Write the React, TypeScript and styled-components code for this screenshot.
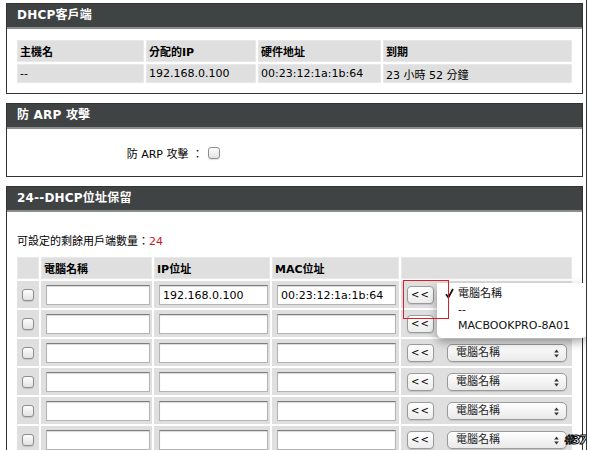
import React from "react";
import styled, { createGlobalStyle } from "styled-components";

const GlobalStyle = createGlobalStyle`
  html, body {
    margin: 0;
    padding: 0;
    background: #fff;
  }
  body {
    font-family: "DejaVu Sans", "Noto Sans CJK TC", sans-serif;
    font-size: 11px;
    color: #000;
  }
`;

const clients = [
  { host: "--", ip: "192.168.0.100", mac: "00:23:12:1a:1b:64", expire: "23 小時 52 分鐘" },
];

const reservations = [
  { name: "", ip: "192.168.0.100", mac: "00:23:12:1a:1b:64" },
  { name: "", ip: "", mac: "" },
  { name: "", ip: "", mac: "" },
  { name: "", ip: "", mac: "" },
  { name: "", ip: "", mac: "" },
  { name: "", ip: "", mac: "" },
];

export default function App() {
  return (
    <>
      <GlobalStyle />
      <Page>
        <Section>
          <SectionTitle>DHCP客戶端</SectionTitle>
          <SectionBody>
            <GridTable>
              <colgroup>
                <col style={{ width: 127 }} />
                <col style={{ width: 110 }} />
                <col style={{ width: 123 }} />
                <col style={{ width: 189 }} />
              </colgroup>
              <thead>
                <tr>
                  <HeadCell>主機名</HeadCell>
                  <HeadCell>分配的IP</HeadCell>
                  <HeadCell>硬件地址</HeadCell>
                  <HeadCell>到期</HeadCell>
                </tr>
              </thead>
              <tbody>
                {clients.map((c) => (
                  <tr key={c.mac}>
                    <DataCell>{c.host}</DataCell>
                    <DataCell>{c.ip}</DataCell>
                    <DataCell>{c.mac}</DataCell>
                    <DataCell>{c.expire}</DataCell>
                  </tr>
                ))}
              </tbody>
            </GridTable>
          </SectionBody>
        </Section>

        <Section>
          <SectionTitle>防 ARP 攻擊</SectionTitle>
          <ArpRow>
            <ArpLabel>防 ARP 攻擊 ：</ArpLabel>
            <CheckBox />
          </ArpRow>
        </Section>

        <Section>
          <SectionTitle>24--DHCP位址保留</SectionTitle>
          <SectionBody>
            <Info>
              可設定的剩餘用戶端數量：<Count>24</Count>
            </Info>
            <GridTable>
              <colgroup>
                <col style={{ width: 22 }} />
                <col style={{ width: 111 }} />
                <col style={{ width: 116 }} />
                <col style={{ width: 127 }} />
                <col style={{ width: 171 }} />
              </colgroup>
              <thead>
                <tr>
                  <HeadCell />
                  <HeadCell>電腦名稱</HeadCell>
                  <HeadCell>IP位址</HeadCell>
                  <HeadCell>MAC位址</HeadCell>
                  <HeadCell />
                </tr>
              </thead>
              <tbody>
                {reservations.map((r, i) => (
                  <ReserveRow key={i}>
                    <CheckCell>
                      <CheckBox />
                    </CheckCell>
                    <InputCell>
                      <TextBox $w={104}>{r.name}</TextBox>
                    </InputCell>
                    <InputCell>
                      <TextBox $w={109}>{r.ip}</TextBox>
                    </InputCell>
                    <InputCell>
                      <TextBox $w={119}>{r.mac}</TextBox>
                    </InputCell>
                    <InputCell>
                      <Controls>
                        <CopyButton>&lt;&lt;</CopyButton>
                        <FakeSelect>
                          電腦名稱
                          <SelectArrows />
                        </FakeSelect>
                      </Controls>
                    </InputCell>
                  </ReserveRow>
                ))}
              </tbody>
            </GridTable>
          </SectionBody>
        </Section>

        <Menu>
          <MenuItem>
            <CheckMark width="9" height="11" viewBox="0 0 9 11">
              <path d="M1 6.2 L3.4 9.5 L8 1" fill="none" stroke="#111" strokeWidth="1.7" />
            </CheckMark>
            電腦名稱
          </MenuItem>
          <MenuItem>--</MenuItem>
          <MenuItem>MACBOOKPRO-8A01</MenuItem>
        </Menu>
        <Highlight />
        <Tag>#37</Tag>
      </Page>
    </>
  );
}

const SelectArrows = () => (
  <ArrowIcon width="5" height="9" viewBox="0 0 5 9">
    <path d="M2.5 0.5 L4.8 3.5 H0.2 Z" fill="#333" />
    <path d="M2.5 8.5 L4.8 5.5 H0.2 Z" fill="#333" />
  </ArrowIcon>
);

const Page = styled.div`
  position: relative;
  width: 580px;
  height: 447px;
  padding: 3px 0 0 6px;
  border-right: 1px solid #333;
  overflow: hidden;
`;

const Section = styled.section`
  width: 575px;
  border: 1px solid #333;
  margin-bottom: 9px;
  background: #fff;
`;

const SectionTitle = styled.h2`
  margin: 0;
  height: 23px;
  line-height: 23px;
  padding-left: 10px;
  background: #404344;
  border-bottom: 2px solid #8b8d8d;
  color: #fff;
  font-size: 12px;
  font-weight: bold;
  letter-spacing: 0.2px;
`;

const SectionBody = styled.div`
  padding: 9px 8px 8px;
`;

const GridTable = styled.table`
  width: 559px;
  table-layout: fixed;
  border-collapse: separate;
  border-spacing: 2px;
  background: #fff;
`;

const HeadCell = styled.th`
  height: 22px;
  padding: 0 0 0 3px;
  background: #dfdfdf;
  box-shadow: inset 0 0 0 1px #e8e8e8;
  text-align: left;
  font-weight: bold;
  white-space: nowrap;
  overflow: hidden;
`;

const DataCell = styled.td`
  height: 19px;
  padding: 0 0 0 3px;
  background: #dfdfdf;
  box-shadow: inset 0 0 0 1px #e8e8e8;
  white-space: nowrap;
`;

const ArpRow = styled.div`
  display: flex;
  align-items: center;
  height: 47px;
`;

const ArpLabel = styled.span`
  width: 196px;
  text-align: right;
  margin-right: 5px;
  margin-top: 1px;
`;

const Info = styled.p`
  margin: 13px 2px 5px;
  line-height: 16px;
`;

const Count = styled.span`
  color: #d0141c;
`;

const ReserveRow = styled.tr`
  height: 27px;
`;

const CheckCell = styled.td`
  padding: 0;
  background: #dfdfdf;
  text-align: center;
  vertical-align: middle;
  line-height: 0;
`;

const InputCell = styled.td`
  padding: 0 0 0 5px;
  background: #dfdfdf;
  vertical-align: middle;
  white-space: nowrap;
  overflow: hidden;
`;

const CheckBox = styled.span`
  display: inline-block;
  box-sizing: border-box;
  width: 12px;
  height: 12px;
  border: 1px solid #8e8e8e;
  border-radius: 3px;
  background: linear-gradient(#fdfdfd, #e2e2e2);
  box-shadow: 0 1px 1px rgba(0, 0, 0, 0.12);
`;

const TextBox = styled.div<{ $w: number }>`
  box-sizing: border-box;
  width: ${(p) => p.$w}px;
  height: 20px;
  line-height: 19px;
  padding-left: 3px;
  background: #fff;
  border: 1px solid #b4b4b4;
  border-top-color: #7d7d7d;
  box-shadow: inset 0 1px 1px rgba(0, 0, 0, 0.15);
  font-size: 11px;
`;

const Controls = styled.div`
  display: flex;
  align-items: center;
  gap: 13px;
  padding-left: 1px;
`;

const CopyButton = styled.div`
  box-sizing: border-box;
  width: 27px;
  height: 18px;
  line-height: 16px;
  text-align: center;
  border: 1px solid #9a9a9a;
  border-radius: 4px;
  background: linear-gradient(#ffffff, #ececec);
  box-shadow: 0 1px 1px rgba(0, 0, 0, 0.12);
  font-size: 10px;
  letter-spacing: 1px;
`;

const FakeSelect = styled.div`
  position: relative;
  box-sizing: border-box;
  width: 120px;
  height: 18px;
  line-height: 16px;
  padding-left: 8px;
  border: 1px solid #9a9a9a;
  border-radius: 5px;
  background: linear-gradient(#ffffff, #e9e9e9);
  box-shadow: 0 1px 1px rgba(0, 0, 0, 0.12);
  color: #222;
`;

const ArrowIcon = styled.svg`
  position: absolute;
  right: 7px;
  top: 4px;
`;

const Menu = styled.div`
  position: absolute;
  left: 437px;
  top: 283px;
  width: 150px;
  padding: 3px 0 4px;
  background: #fff;
  border-radius: 0 0 5px 5px;
  box-shadow: 0 4px 10px rgba(0, 0, 0, 0.35);
`;

const MenuItem = styled.div`
  position: relative;
  height: 16px;
  line-height: 16px;
  padding-left: 21px;
  font-size: 11px;
  color: #111;
`;

const CheckMark = styled.svg`
  position: absolute;
  left: 8px;
  top: 2px;
`;

const Highlight = styled.div`
  position: absolute;
  left: 403px;
  top: 280px;
  width: 44px;
  height: 37px;
  border: 1px solid #d6202a;
`;

const Tag = styled.div`
  position: absolute;
  left: 564px;
  top: 432px;
  line-height: 16px;
  font-family: "DejaVu Sans", sans-serif;
  font-size: 13px;
  font-weight: bold;
  font-style: italic;
  letter-spacing: -1.5px;
  color: #fff;
  -webkit-text-stroke: 1px #000;
`;
